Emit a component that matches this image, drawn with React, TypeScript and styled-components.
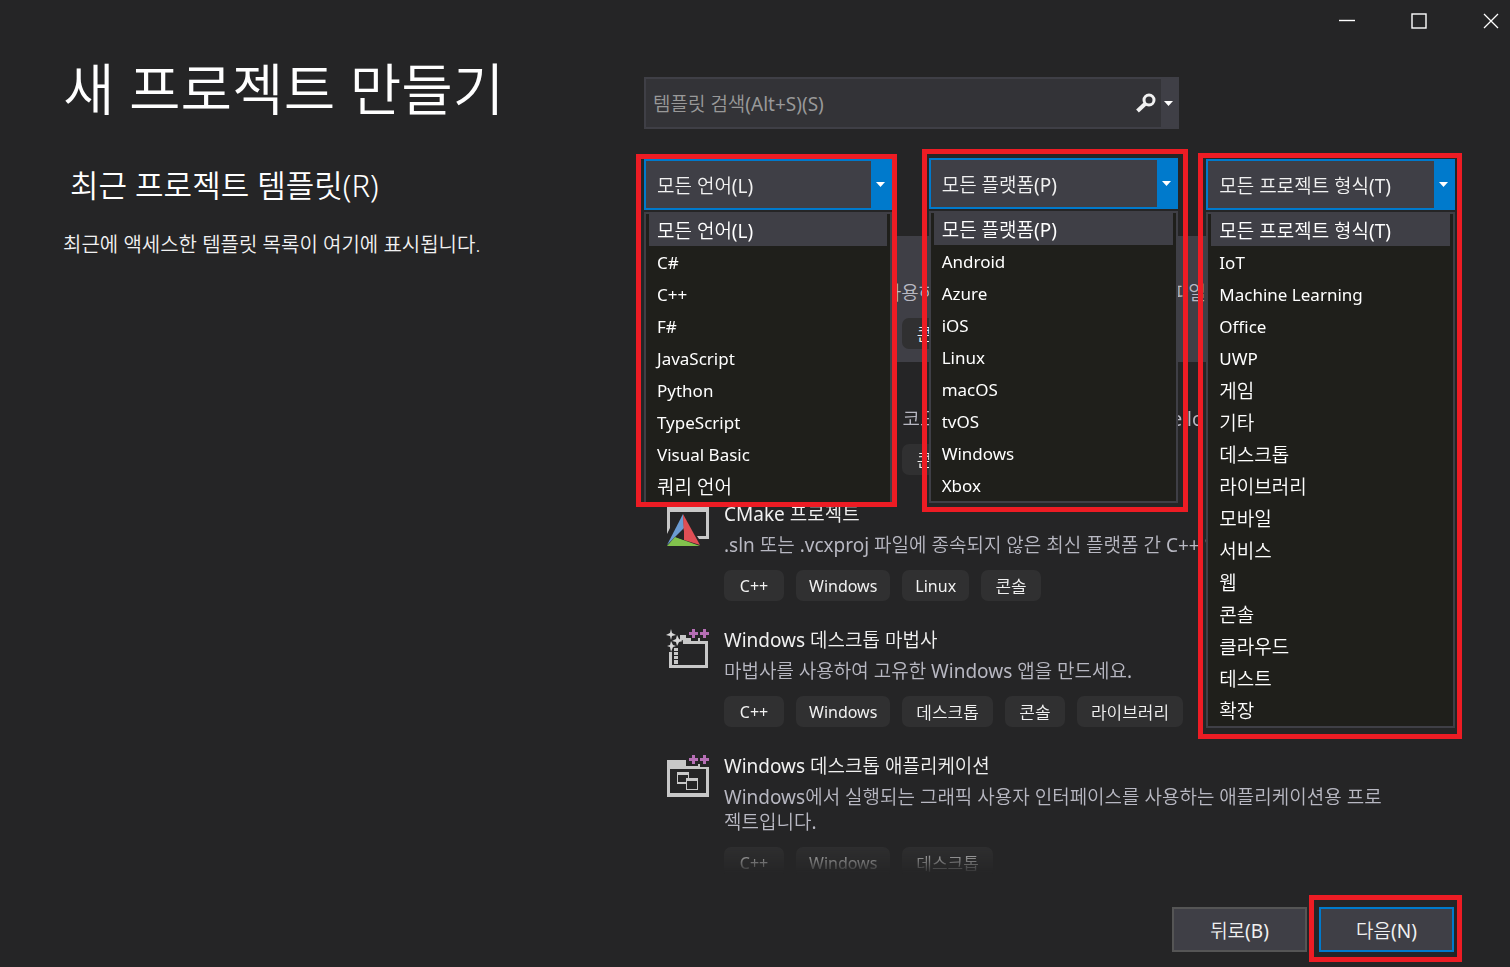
import React, { useState } from "react";
import styled, { createGlobalStyle } from "styled-components";

const GlobalStyle = createGlobalStyle`
  *, *::before, *::after { box-sizing: border-box; }
  body { margin: 0; background: #252526; }
  body, button, input, select {
    font-family: "Noto Sans", "Noto Sans CJK KR DemiLight", "Noto Sans CJK KR", sans-serif;
    font-size: 19px;
    font-weight: 400;
    color: #f1f1f1;
  }
  h1, h2, h3, p, ul { margin: 0; padding: 0; font-weight: 400; }
  ul { list-style: none; }
`;

const isLatin = (text: string) => /^[\x20-\x7e]+$/.test(text);

const Page = styled.div`
  display: flex;
  flex-direction: column;
  height: 100vh;
  min-height: 600px;
  overflow: hidden;
`;

const TitleBar = styled.header`
  display: flex;
  justify-content: flex-end;
  gap: 34px;
  height: 42px;
`;

const WindowButton = styled.button`
  display: grid;
  place-items: center;
  width: 38px;
  padding: 0;
  border: 0;
  background: transparent;
`;

const Main = styled.main`
  flex: 1;
  min-height: 0;
  display: grid;
  grid-template-columns: minmax(520px, 644fr) 810fr;
  grid-template-rows: minmax(0, 1fr);
  padding-right: 56px;
`;

const Intro = styled.section`
  padding: 12px 24px 0 63px;
`;

const Heading = styled.h1`
  font-size: 56px;
  font-weight: 350;
  line-height: 68px;
  color: #fff;
`;

const RecentHeading = styled.h2`
  margin: 43px 0 0 7px;
  font-size: 31px;
  font-weight: 350;
  line-height: 40px;
  color: #fff;
`;

const RecentNote = styled.p`
  margin-top: 26px;
  font-size: 20px;
  font-weight: 350;
  line-height: 28px;
`;

const Browser = styled.section`
  display: flex;
  flex-direction: column;
  min-width: 0;
  padding-top: 35px;
`;

const SearchBox = styled.div`
  display: flex;
  width: 66%;
  height: 52px;
  border: 2px solid #3f3f46;
  background: #333337;
`;

const SearchInput = styled.input`
  flex: 1;
  min-width: 0;
  padding: 2px 7px 0;
  border: 0;
  outline: 0;
  background: transparent;
  &::placeholder { color: #999; opacity: 1; }
`;

const SearchButton = styled.button`
  display: grid;
  place-items: center;
  width: 30px;
  padding: 0;
  border: 0;
  background: transparent;
`;

const SearchMenuButton = styled(SearchButton)`
  width: 16px;
  background: #3f3f46;
`;

const Filters = styled.div`
  display: grid;
  grid-template-columns: repeat(3, 1fr);
  gap: 32px;
  margin-top: 29px;
`;

const FilterSlot = styled.div`
  position: relative;
  height: 52px;
`;

const FilterFrame = styled.div<{ $inset: string; $padding: string }>`
  position: absolute;
  z-index: 2;
  inset: ${(p) => p.$inset};
  padding: ${(p) => p.$padding};
  border: 5px solid #ed1c24;
`;

const Field = styled.div`
  display: flex;
  height: 51px;
  border: 2px solid #007acc;
  background: #3f3f46;
`;

const FieldSelect = styled.select`
  flex: 1;
  min-width: 0;
  padding: 2px 11px 0;
  border: 0;
  outline: 0;
  appearance: none;
  background: transparent;
`;

const FieldArrow = styled.span`
  display: grid;
  place-items: center;
  width: 19px;
  background: #007acc;
`;

const Popup = styled.ul<{ $open?: boolean }>`
  margin-top: 2px;
  padding: 0 3px;
  border: 2px solid #3f3f46;
  border-bottom-width: ${(p) => (p.$open ? "0" : "2px")};
  background: #1f1f1b;
`;

const Option = styled.li<{ $selected: boolean; $latin: boolean }>`
  height: 32px;
  padding: 0 8px;
  line-height: 34px;
  font-size: ${(p) => (p.$latin ? "17px" : "19px")};
  white-space: nowrap;
  color: #fff;
  background: ${(p) => (p.$selected ? "#3f3f46" : "transparent")};
`;

const TemplateList = styled.ul`
  flex: 1;
  min-height: 0;
  margin-top: 26px;
  overflow: hidden;
  mask-image: linear-gradient(to top, transparent 0, #000 32px);
`;

const TemplateItem = styled.li<{ $selected?: boolean }>`
  display: flex;
  gap: 14px;
  padding: 14px 60px 13px 22px;
  background: ${(p) => (p.$selected ? "#3f3f46" : "transparent")};
`;

const TemplateIcon = styled.svg`
  flex: none;
  width: 44px;
  height: 44px;
`;

const TemplateText = styled.div`
  min-width: 0;
`;

const TemplateTitle = styled.h3`
  font-size: 19px;
  line-height: 24px;
`;

const TemplateDescription = styled.p`
  margin-top: 7px;
  line-height: 25px;
  color: #b8b8c2;
`;

const Tags = styled.ul`
  display: flex;
  gap: 12px;
  margin-top: 12px;
`;

const Tag = styled.li<{ $latin: boolean }>`
  min-width: 60px;
  height: 31px;
  padding: 0 ${(p) => (p.$latin ? "13px" : "14px")};
  border-radius: 7px;
  background: #303031;
  font-size: ${(p) => (p.$latin ? "16px" : "17px")};
  line-height: 33px;
  text-align: center;
  white-space: nowrap;
`;

const Footer = styled.footer`
  display: flex;
  justify-content: flex-end;
  gap: 12px;
  padding: 33px 56px 15px;
`;

const FooterButton = styled.button<{ $primary?: boolean }>`
  width: 135px;
  height: 45px;
  padding: 0;
  border: 2px solid ${(p) => (p.$primary ? "#007acc" : "#555")};
  background: #3f3f46;
`;

const NextSlot = styled.div`
  position: relative;
  display: flex;
  &::after {
    content: "";
    position: absolute;
    inset: -12px -8px -10px -10px;
    border: 5px solid #ed1c24;
    pointer-events: none;
  }
`;

const Caret = () => (
  <svg width="9" height="5" viewBox="0 0 9 5" aria-hidden="true">
    <path d="M0 0h9L4.5 5z" fill="#fff" />
  </svg>
);

const PlusPlus = () => (
  <path d="M26 1h3v3h3v3h-3v3h-3V7h-3V4h3zM37 1h3v3h3v3h-3v3h-3V7h-3V4h3z" fill="#b66fb5" />
);

type IconName = "window" | "console" | "cmake" | "wizard" | "desktop";

const Icon = ({ name }: { name: IconName }) => (
  <TemplateIcon viewBox="0 0 44 44" aria-hidden="true">
    {name === "cmake" && (
      <>
        <path d="M1 32V4h42v33H33l-2-3h9V10H4v16z" fill="#c8c8c8" />
        <path d="M17 12L1 43l8-8 9-9z" fill="#6b9bd2" />
        <path d="M17 12l1 26 16 5z" fill="#e04f55" />
        <path d="M9 35L1 44h33z" fill="#82c24d" />
        <path d="M18 28l-8 7 8 3z" fill="#252526" />
      </>
    )}
    {name === "wizard" && (
      <>
        <path d="M14 7h6v3h5v3h17v27H3V24h3v13h33V16H17v-4h-3z" fill="#c8c8c8" />
        <path d="M32 10h2v4h-2zM8 20h4v3H8zM8 24h4v3H8zM8 28h4v3H8zM8 32h4v4H8z" fill="#c8c8c8" />
        <path
          d="M5 1l1 4 4 2-4 1-1 4-1-4-4-1 4-2zM11 7l2 4 4 2-4 1-2 4-1-4-4-1 4-2zM5 13l2 4 3 1-3 1-2 5-1-5-3-1 3-1z"
          fill="#d8d8d8"
        />
        <PlusPlus />
      </>
    )}
    {(name === "desktop" || name === "window" || name === "console") && (
      <>
        <path d="M1 6h19v6h12v-2h2v3h9v30H1zm3 9v24h36V15z" fill="#c8c8c8" fillRule="evenodd" />
        {name === "console" ? (
          <path d="M9 20l6 5-6 5M18 32h9" stroke="#c8c8c8" strokeWidth="2" fill="none" />
        ) : (
          <>
            <path d="M11 18h12v6h-1v-3H12v7h8v2h-9z" fill="#c8c8c8" />
            <path d="M20 24h12v12H20zm1 3v8h10v-8z" fill="#c8c8c8" fillRule="evenodd" />
          </>
        )}
        <PlusPlus />
      </>
    )}
  </TemplateIcon>
);

interface FilterProps {
  label: string;
  options: string[];
  inset: string;
  padding: string;
  open?: boolean;
}

const Filter = ({ label, options, inset, padding, open }: FilterProps) => {
  const [value, setValue] = useState(options[0]);
  return (
    <FilterSlot>
      <FilterFrame $inset={inset} $padding={padding}>
        <Field>
          <FieldSelect aria-label={label} value={value} onChange={(e) => setValue(e.target.value)}>
            {options.map((o) => (
              <option key={o}>{o}</option>
            ))}
          </FieldSelect>
          <FieldArrow>
            <Caret />
          </FieldArrow>
        </Field>
        <Popup role="listbox" aria-label={label} $open={open}>
          {options.map((o) => (
            <Option
              key={o}
              role="option"
              aria-selected={o === value}
              $selected={o === value}
              $latin={isLatin(o)}
              onClick={() => setValue(o)}
            >
              {o}
            </Option>
          ))}
        </Popup>
      </FilterFrame>
    </FilterSlot>
  );
};

const languages = ["모든 언어(L)", "C#", "C++", "F#", "JavaScript", "Python", "TypeScript", "Visual Basic", "쿼리 언어"];
const platforms = ["모든 플랫폼(P)", "Android", "Azure", "iOS", "Linux", "macOS", "tvOS", "Windows", "Xbox"];
const projectTypes = [
  "모든 프로젝트 형식(T)", "IoT", "Machine Learning", "Office", "UWP", "게임", "기타", "데스크톱",
  "라이브러리", "모바일", "서비스", "웹", "콘솔", "클라우드", "테스트", "확장",
];

const templates: { icon: IconName; title: string; text: string; tags: string[] }[] = [
  {
    icon: "window",
    title: "빈 프로젝트",
    text: "Windows용 C++를 사용하여 처음부터 시작합니다. 시작 파일을 제공하지 않습니다.",
    tags: ["C++", "Windows", "콘솔"],
  },
  {
    icon: "console",
    title: "콘솔 앱",
    text: "Windows 터미널에서 코드를 실행합니다. 기본적으로 \"Hello World\"를 인쇄합니다.",
    tags: ["C++", "Windows", "콘솔"],
  },
  {
    icon: "cmake",
    title: "CMake 프로젝트",
    text: ".sln 또는 .vcxproj 파일에 종속되지 않은 최신 플랫폼 간 C++ 앱을 빌드합니다.",
    tags: ["C++", "Windows", "Linux", "콘솔"],
  },
  {
    icon: "wizard",
    title: "Windows 데스크톱 마법사",
    text: "마법사를 사용하여 고유한 Windows 앱을 만드세요.",
    tags: ["C++", "Windows", "데스크톱", "콘솔", "라이브러리"],
  },
  {
    icon: "desktop",
    title: "Windows 데스크톱 애플리케이션",
    text: "Windows에서 실행되는 그래픽 사용자 인터페이스를 사용하는 애플리케이션용 프로젝트입니다.",
    tags: ["C++", "Windows", "데스크톱"],
  },
];

export default function App() {
  return (
    <Page lang="ko">
      <GlobalStyle />
      <TitleBar>
        <WindowButton aria-label="최소화">
          <svg width="16" height="16" viewBox="0 0 16 16">
            <path d="M0 7.5h16" stroke="#fff" strokeWidth="1.4" />
          </svg>
        </WindowButton>
        <WindowButton aria-label="최대화">
          <svg width="16" height="16" viewBox="0 0 16 16">
            <rect x="1" y="1" width="14" height="14" fill="none" stroke="#fff" strokeWidth="1.4" />
          </svg>
        </WindowButton>
        <WindowButton aria-label="닫기">
          <svg width="16" height="16" viewBox="0 0 16 16">
            <path d="M1 1l14 14M15 1L1 15" stroke="#fff" strokeWidth="1.3" />
          </svg>
        </WindowButton>
      </TitleBar>
      <Main>
        <Intro>
          <Heading>새 프로젝트 만들기</Heading>
          <RecentHeading>최근 프로젝트 템플릿(R)</RecentHeading>
          <RecentNote>최근에 액세스한 템플릿 목록이 여기에 표시됩니다.</RecentNote>
        </Intro>
        <Browser>
          <SearchBox>
            <SearchInput aria-label="템플릿 검색" placeholder="템플릿 검색(Alt+S)(S)" />
            <SearchButton aria-label="검색">
              <svg width="20" height="20" viewBox="0 0 20 20">
                <circle cx="13" cy="7" r="5" fill="none" stroke="#f1f1f1" strokeWidth="3" />
                <path d="M9 11l-7.500 7" stroke="#f1f1f1" strokeWidth="4" />
              </svg>
            </SearchButton>
            <SearchMenuButton aria-label="검색 옵션">
              <Caret />
            </SearchMenuButton>
          </SearchBox>
          <Filters>
            <Filter label="언어" options={languages} inset="-4px -4px auto -8px" padding="0 0 0 3px" open />
            <Filter label="플랫폼" options={platforms} inset="-9px -15px auto -3px" padding="4px 5px 4px 2px" />
            <Filter label="프로젝트 형식" options={projectTypes} inset="-5px -8px auto -7px" padding="1px 2px 6px 3px" />
          </Filters>
          <TemplateList>
            {templates.map((t, i) => (
              <TemplateItem key={t.title} $selected={i === 0}>
                <Icon name={t.icon} />
                <TemplateText>
                  <TemplateTitle>{t.title}</TemplateTitle>
                  <TemplateDescription>{t.text}</TemplateDescription>
                  <Tags>
                    {t.tags.map((tag) => (
                      <Tag key={tag} $latin={isLatin(tag)}>
                        {tag}
                      </Tag>
                    ))}
                  </Tags>
                </TemplateText>
              </TemplateItem>
            ))}
          </TemplateList>
        </Browser>
      </Main>
      <Footer>
        <FooterButton>뒤로(B)</FooterButton>
        <NextSlot>
          <FooterButton $primary>다음(N)</FooterButton>
        </NextSlot>
      </Footer>
    </Page>
  );
}
